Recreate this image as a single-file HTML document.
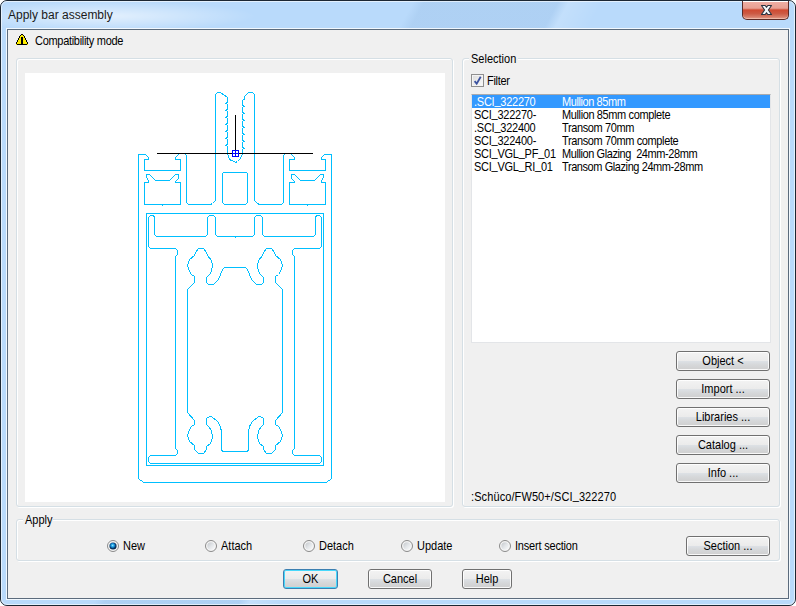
<!DOCTYPE html>
<html><head><meta charset="utf-8">
<style>
html,body{margin:0;padding:0;width:796px;height:606px;overflow:hidden;background:#fff;}
*{box-sizing:border-box;}
body{font-family:"Liberation Sans",sans-serif;font-size:11px;color:#000;position:relative;}
.a{position:absolute;}
.win{left:0;top:0;width:796px;height:606px;border:1px solid #1c2733;border-radius:7px;
 background:radial-gradient(ellipse 150px 15px at 105px 15px,rgba(255,255,255,.6),rgba(255,255,255,0)),
 linear-gradient(118deg,rgba(0,0,0,0) 0,rgba(0,0,0,0) 37%,rgba(120,160,205,.16) 38%,rgba(120,160,205,.16) 50%,rgba(255,255,255,.15) 51%,rgba(0,0,0,0) 54%,rgba(0,0,0,0) 100%),
 #b9dafb;}
.glassin{left:1px;top:1px;width:794px;height:604px;border:1px solid rgba(255,255,255,.6);border-radius:6px;}
.client{left:7px;top:29px;width:782px;height:570px;background:#f0f0f0;border:1px solid #5b6b7c;}
.client2{left:6px;top:28px;width:784px;height:572px;border:1px solid rgba(255,255,255,.8);}
.t{position:absolute;white-space:pre;line-height:13px;}
.gb{position:absolute;border:1px solid #d5dfe5;border-radius:3px;box-shadow:inset 1px 1px 0 #fff,1px 1px 0 #fff;}
.gbl{position:absolute;background:#f0f0f0;padding:0 2px;white-space:pre;line-height:13px;}
.btn{position:absolute;border:1px solid #707070;border-radius:3px;height:20px;
 background:linear-gradient(#f3f3f3 0%,#ebebeb 50%,#dde1e6 50%,#d6d8da 70%,#cfcfcf 100%);
 box-shadow:inset 0 0 0 1px rgba(255,255,255,.85);text-align:center;line-height:17px;white-space:pre;}
.btn.def{border-color:#3c7fb1;box-shadow:inset 0 0 0 1px #48d8fb;}
.t,.gbl{transform:scaleY(1.12);transform-origin:0 10.3px;}
.btn span{display:inline-block;position:relative;top:1px;line-height:13px;transform:scaleY(1.12);transform-origin:50% 10.3px;}
.ttl{transform:none;}
.us{position:relative;top:-2px;}
</style></head><body>
<div class="a win"></div>
<div class="a glassin"></div>
<div class="t ttl" style="left:8px;top:8px;font-size:12px;line-height:15px;color:#1a1a1a;">Apply bar assembly</div>

<!-- close button -->
<div class="a" style="left:742px;top:1px;width:47px;height:19px;border:1px solid #5a2a26;border-top:none;border-radius:0 0 5px 5px;
 background:linear-gradient(#f0b0a6 0,#e8a093 40%,#cf4a32 50%,#cc5a44 70%,#d8806c 90%,#e8aa98 100%);box-shadow:inset 0 1px 0 #fff,inset 0 -1px 0 #efb9a8;"></div>
<svg class="a" style="left:760px;top:4px" width="14" height="12" viewBox="0 0 14 12">
 <path d="M1.5,1.5 H5.2 L6.5,3.3 L7.8,1.5 H11.5 L8.4,6 L11.5,10.5 H7.8 L6.5,8.7 L5.2,10.5 H1.5 L4.6,6 Z" fill="#f4f6f8" stroke="#2b3340" stroke-width="1.1" stroke-linejoin="round"/>
</svg>

<div class="a client2"></div>
<div class="a client"></div>

<!-- compatibility -->
<svg class="a" style="left:16px;top:34px" width="12" height="11" viewBox="0 0 12 11" shape-rendering="crispEdges"><rect x="5" y="0" width="1" height="1" fill="#000"/><rect x="6" y="0" width="1" height="1" fill="#000"/><rect x="4" y="1" width="1" height="1" fill="#000"/><rect x="5" y="1" width="1" height="1" fill="#ffee00"/><rect x="6" y="1" width="1" height="1" fill="#ffee00"/><rect x="7" y="1" width="1" height="1" fill="#000"/><rect x="3" y="2" width="1" height="1" fill="#000"/><rect x="4" y="2" width="1" height="1" fill="#ffee00"/><rect x="5" y="2" width="1" height="1" fill="#ffee00"/><rect x="6" y="2" width="1" height="1" fill="#ffee00"/><rect x="7" y="2" width="1" height="1" fill="#ffee00"/><rect x="8" y="2" width="1" height="1" fill="#000"/><rect x="3" y="3" width="1" height="1" fill="#000"/><rect x="4" y="3" width="1" height="1" fill="#ffee00"/><rect x="5" y="3" width="1" height="1" fill="#000"/><rect x="6" y="3" width="1" height="1" fill="#000"/><rect x="7" y="3" width="1" height="1" fill="#ffee00"/><rect x="8" y="3" width="1" height="1" fill="#000"/><rect x="2" y="4" width="1" height="1" fill="#000"/><rect x="3" y="4" width="1" height="1" fill="#ffee00"/><rect x="4" y="4" width="1" height="1" fill="#ffee00"/><rect x="5" y="4" width="1" height="1" fill="#000"/><rect x="6" y="4" width="1" height="1" fill="#000"/><rect x="7" y="4" width="1" height="1" fill="#ffee00"/><rect x="8" y="4" width="1" height="1" fill="#ffee00"/><rect x="9" y="4" width="1" height="1" fill="#000"/><rect x="2" y="5" width="1" height="1" fill="#000"/><rect x="3" y="5" width="1" height="1" fill="#ffee00"/><rect x="4" y="5" width="1" height="1" fill="#ffee00"/><rect x="5" y="5" width="1" height="1" fill="#000"/><rect x="6" y="5" width="1" height="1" fill="#000"/><rect x="7" y="5" width="1" height="1" fill="#ffee00"/><rect x="8" y="5" width="1" height="1" fill="#ffee00"/><rect x="9" y="5" width="1" height="1" fill="#000"/><rect x="1" y="6" width="1" height="1" fill="#000"/><rect x="2" y="6" width="1" height="1" fill="#ffee00"/><rect x="3" y="6" width="1" height="1" fill="#ffee00"/><rect x="4" y="6" width="1" height="1" fill="#ffee00"/><rect x="5" y="6" width="1" height="1" fill="#000"/><rect x="6" y="6" width="1" height="1" fill="#000"/><rect x="7" y="6" width="1" height="1" fill="#ffee00"/><rect x="8" y="6" width="1" height="1" fill="#ffee00"/><rect x="9" y="6" width="1" height="1" fill="#ffee00"/><rect x="10" y="6" width="1" height="1" fill="#000"/><rect x="1" y="7" width="1" height="1" fill="#000"/><rect x="2" y="7" width="1" height="1" fill="#ffee00"/><rect x="3" y="7" width="1" height="1" fill="#ffee00"/><rect x="4" y="7" width="1" height="1" fill="#ffee00"/><rect x="5" y="7" width="1" height="1" fill="#000"/><rect x="6" y="7" width="1" height="1" fill="#000"/><rect x="7" y="7" width="1" height="1" fill="#ffee00"/><rect x="8" y="7" width="1" height="1" fill="#ffee00"/><rect x="9" y="7" width="1" height="1" fill="#ffee00"/><rect x="10" y="7" width="1" height="1" fill="#000"/><rect x="0" y="8" width="1" height="1" fill="#000"/><rect x="1" y="8" width="1" height="1" fill="#ffee00"/><rect x="2" y="8" width="1" height="1" fill="#ffee00"/><rect x="3" y="8" width="1" height="1" fill="#ffee00"/><rect x="4" y="8" width="1" height="1" fill="#ffee00"/><rect x="5" y="8" width="1" height="1" fill="#000"/><rect x="6" y="8" width="1" height="1" fill="#000"/><rect x="7" y="8" width="1" height="1" fill="#ffee00"/><rect x="8" y="8" width="1" height="1" fill="#ffee00"/><rect x="9" y="8" width="1" height="1" fill="#ffee00"/><rect x="10" y="8" width="1" height="1" fill="#ffee00"/><rect x="11" y="8" width="1" height="1" fill="#000"/><rect x="0" y="9" width="1" height="1" fill="#000"/><rect x="1" y="9" width="1" height="1" fill="#ffee00"/><rect x="2" y="9" width="1" height="1" fill="#ffee00"/><rect x="3" y="9" width="1" height="1" fill="#ffee00"/><rect x="4" y="9" width="1" height="1" fill="#ffee00"/><rect x="5" y="9" width="1" height="1" fill="#000"/><rect x="6" y="9" width="1" height="1" fill="#000"/><rect x="7" y="9" width="1" height="1" fill="#ffee00"/><rect x="8" y="9" width="1" height="1" fill="#ffee00"/><rect x="9" y="9" width="1" height="1" fill="#ffee00"/><rect x="10" y="9" width="1" height="1" fill="#ffee00"/><rect x="11" y="9" width="1" height="1" fill="#000"/><rect x="0" y="10" width="1" height="1" fill="#ffee00"/><rect x="1" y="10" width="1" height="1" fill="#000"/><rect x="2" y="10" width="1" height="1" fill="#000"/><rect x="3" y="10" width="1" height="1" fill="#000"/><rect x="4" y="10" width="1" height="1" fill="#000"/><rect x="5" y="10" width="1" height="1" fill="#000"/><rect x="6" y="10" width="1" height="1" fill="#000"/><rect x="7" y="10" width="1" height="1" fill="#000"/><rect x="8" y="10" width="1" height="1" fill="#000"/><rect x="9" y="10" width="1" height="1" fill="#000"/><rect x="10" y="10" width="1" height="1" fill="#000"/><rect x="11" y="10" width="1" height="1" fill="#ffee00"/></svg>
<div class="t" style="left:35px;top:35px;letter-spacing:-0.3px;">Compatibility mode</div>

<!-- left group -->
<div class="gb" style="left:16px;top:58px;width:437px;height:449px;"></div>
<div class="a" style="left:25px;top:73px;width:420px;height:429px;background:#fff;"></div>

<!-- right group -->
<div class="gb" style="left:462px;top:58px;width:318px;height:449px;"></div>
<div class="gbl" style="left:469px;top:53px;">Selection</div>
<div class="a" style="left:471px;top:74px;width:13px;height:13px;border:1px solid #8f8f8f;background:linear-gradient(135deg,#dcdcdc,#fbfbfb);box-shadow:inset 0 0 0 1px #f4f4f4;"></div>
<svg class="a" style="left:472px;top:75px" width="11" height="11" viewBox="0 0 11 11"><path d="M2.6 6.2 L4.7 8.7 L8.7 1.8" fill="none" stroke="#3b52a0" stroke-width="1.8"/></svg>
<div class="t" style="left:487px;top:75px;letter-spacing:-0.3px;">Filter</div>

<div class="a" style="left:471px;top:94px;width:300px;height:249px;background:#fff;border:1px solid #e3e5e8;border-top-color:#a9aaad;"></div>
<div class="a" style="left:472px;top:95px;width:298px;height:13px;background:#3399ff;"></div>
<div class="a" id="lb" style="left:474px;top:96px;letter-spacing:-0.25px;">
<div class="t" style="left:0;top:0;color:#fff">.SCI<span class="us">_</span>322270</div><div class="t" style="left:88px;top:0;color:#fff;letter-spacing:-0.42px">Mullion 85mm</div>
<div class="t" style="left:0;top:13px">SCI<span class="us">_</span>322270-</div><div class="t" style="left:88px;top:13px;letter-spacing:-0.38px">Mullion 85mm complete</div>
<div class="t" style="left:0;top:26px">.SCI<span class="us">_</span>322400</div><div class="t" style="left:88px;top:26px;letter-spacing:-0.38px">Transom 70mm</div>
<div class="t" style="left:0;top:39px">SCI<span class="us">_</span>322400-</div><div class="t" style="left:88px;top:39px;letter-spacing:-0.38px">Transom 70mm complete</div>
<div class="t" style="left:0;top:52px">SCI<span class="us">_</span>VGL<span class="us">_</span>PF<span class="us">_</span>01</div><div class="t" style="left:88px;top:52px;letter-spacing:-0.42px">Mullion Glazing  24mm-28mm</div>
<div class="t" style="left:0;top:65px">SCI<span class="us">_</span>VGL<span class="us">_</span>RI<span class="us">_</span>01</div><div class="t" style="left:88px;top:65px;letter-spacing:-0.42px">Transom Glazing 24mm-28mm</div>
</div>

<div class="btn" style="left:676px;top:351px;width:94px;"><span>Object &lt;</span></div>
<div class="btn" style="left:676px;top:379px;width:94px;"><span>Import ...</span></div>
<div class="btn" style="left:676px;top:407px;width:94px;"><span>Libraries ...</span></div>
<div class="btn" style="left:676px;top:435px;width:94px;"><span>Catalog ...</span></div>
<div class="btn" style="left:676px;top:463px;width:94px;"><span>Info ...</span></div>
<div class="t" style="left:471px;top:491px;letter-spacing:0.1px;">:Schüco/FW50+/SCI<span class="us">_</span>322270</div>

<svg width="0" height="0" style="position:absolute"><defs>
<radialGradient id="rdot" cx="0.45" cy="0.42" r="0.55"><stop offset="0" stop-color="#a0e8ff"/><stop offset="0.25" stop-color="#34b8f0"/><stop offset="0.5" stop-color="#1580c8"/><stop offset="0.72" stop-color="#0a4478"/><stop offset="0.9" stop-color="#072c50"/></radialGradient>
<linearGradient id="roff" x1="0" y1="0" x2="1" y2="1"><stop offset="0" stop-color="#c4c8cc"/><stop offset="0.5" stop-color="#e2e5e8"/><stop offset="1" stop-color="#fafbfc"/></linearGradient>
</defs></svg>
<!-- apply group -->
<div class="gb" style="left:16px;top:519px;width:764px;height:42px;"></div>
<div class="gbl" style="left:23px;top:514px;padding-right:0;">Apply</div>
<svg class="a" style="left:107px;top:540px" width="12" height="12" viewBox="0 0 12 12"><circle cx="6" cy="6" r="5.5" fill="#f6f6f6" stroke="#8a8a8a" stroke-width="1"/><circle cx="6" cy="6" r="3.6" fill="url(#rdot)"/></svg><div class="t" style="left:123px;top:540px;">New</div>
<svg class="a" style="left:205px;top:540px" width="12" height="12" viewBox="0 0 12 12"><circle cx="6" cy="6" r="5.5" fill="#f6f6f6" stroke="#8a8a8a" stroke-width="1"/><circle cx="6" cy="6" r="3.7" fill="url(#roff)"/></svg><div class="t" style="left:221px;top:540px;">Attach</div>
<svg class="a" style="left:303px;top:540px" width="12" height="12" viewBox="0 0 12 12"><circle cx="6" cy="6" r="5.5" fill="#f6f6f6" stroke="#8a8a8a" stroke-width="1"/><circle cx="6" cy="6" r="3.7" fill="url(#roff)"/></svg><div class="t" style="left:319px;top:540px;">Detach</div>
<svg class="a" style="left:401px;top:540px" width="12" height="12" viewBox="0 0 12 12"><circle cx="6" cy="6" r="5.5" fill="#f6f6f6" stroke="#8a8a8a" stroke-width="1"/><circle cx="6" cy="6" r="3.7" fill="url(#roff)"/></svg><div class="t" style="left:417px;top:540px;">Update</div>
<svg class="a" style="left:499px;top:540px" width="12" height="12" viewBox="0 0 12 12"><circle cx="6" cy="6" r="5.5" fill="#f6f6f6" stroke="#8a8a8a" stroke-width="1"/><circle cx="6" cy="6" r="3.7" fill="url(#roff)"/></svg><div class="t" style="left:515px;top:540px;letter-spacing:-0.2px;">Insert section</div>
<div class="btn" style="left:686px;top:536px;width:84px;"><span>Section ...</span></div>

<div class="btn def" style="left:283px;top:569px;width:55px;"><span>OK</span></div>
<div class="btn" style="left:368px;top:569px;width:64px;"><span>Cancel</span></div>
<div class="btn" style="left:462px;top:569px;width:50px;"><span>Help</span></div>

<!-- drawing -->
<svg class="a" id="drw" style="left:0;top:0" width="796" height="606" viewBox="0 0 796 606" shape-rendering="crispEdges">
<path d="M234.5,482.5 L143.5,482.5 L142.5,481.5 L141.5,480.5 L140.5,480.5 L139.5,479.5 L138.5,478.5 L138.5,154.5 L145.5,154.5 L148.5,157.5 L148.5,159.5 L144.5,159.5 L144.5,170.5 L180.5,170.5 L180.5,159.5 L175.5,159.5 L175.5,157.5 L178.5,154.5 L179.5,153.5 L184.5,153.5 L185.5,154.5 L186.5,155.5 L186.5,202.5 L188.5,204.5 L210.5,204.5 L212.5,203.5 L214.5,201.5 L215.5,200.5 M235.5,482.5 L326.5,482.5 L327.5,481.5 L328.5,480.5 L329.5,480.5 L330.5,479.5 L331.5,478.5 L331.5,154.5 L324.5,154.5 L321.5,157.5 L321.5,159.5 L325.5,159.5 L325.5,170.5 L289.5,170.5 L289.5,159.5 L294.5,159.5 L294.5,157.5 L291.5,154.5 L290.5,153.5 L285.5,153.5 L284.5,154.5 L283.5,155.5 L283.5,202.5 L281.5,204.5 L259.5,204.5 L257.5,203.5 L255.5,201.5 L254.5,200.5 M234.5,236.5 L217.5,236.5 L215.5,234.5 L215.5,217.5 L213.5,215.5 L209.5,215.5 L207.5,217.5 L207.5,234.5 L205.5,236.5 L156.5,236.5 L154.5,234.5 L154.5,217.5 L153.5,215.5 L150.5,215.5 L148.5,217.5 L148.5,246.5 L150.5,248.5 L175.5,248.5 L177.5,250.5 L177.5,254.5 L175.5,256.5 L175.5,448.5 L177.5,450.5 L177.5,453.5 L175.5,455.5 L150.5,455.5 L148.5,457.5 L148.5,461.5 L150.5,463.5 L234.5,463.5 M235.5,236.5 L252.5,236.5 L254.5,234.5 L254.5,217.5 L256.5,215.5 L260.5,215.5 L262.5,217.5 L262.5,234.5 L264.5,236.5 L313.5,236.5 L315.5,234.5 L315.5,217.5 L316.5,215.5 L319.5,215.5 L321.5,217.5 L321.5,246.5 L319.5,248.5 L294.5,248.5 L292.5,250.5 L292.5,254.5 L294.5,256.5 L294.5,448.5 L292.5,450.5 L292.5,453.5 L294.5,455.5 L319.5,455.5 L321.5,457.5 L321.5,461.5 L319.5,463.5 L235.5,463.5 M234.5,267.5 L224.5,267.5 L222.5,269.5 L218.5,279.5 L215.5,282.5 L213.5,284.5 L208.5,284.5 L206.5,282.5 L206.5,277.5 L209.5,274.5 L211.5,271.5 L212.5,265.5 L211.5,260.5 L207.5,255.5 L206.5,252.5 L203.5,248.5 L198.5,248.5 L195.5,252.5 L194.5,255.5 L189.5,259.5 L187.5,265.5 L189.5,271.5 L191.5,274.5 L194.5,276.5 L194.5,282.5 L192.5,284.5 L187.5,289.5 L187.5,412.5 L194.5,420.5 L194.5,424.5 L191.5,426.5 L189.5,429.5 L187.5,435.5 L189.5,441.5 L194.5,445.5 L194.5,449.5 L198.5,453.5 L203.5,453.5 L206.5,449.5 L206.5,446.5 L210.5,443.5 L212.5,437.5 L211.5,430.5 L208.5,426.5 L206.5,424.5 L206.5,418.5 L209.5,416.5 L211.5,416.5 L217.5,421.5 L220.5,426.5 L221.5,432.5 L221.5,450.5 L223.5,451.5 L234.5,451.5 M235.5,267.5 L245.5,267.5 L247.5,269.5 L251.5,279.5 L254.5,282.5 L256.5,284.5 L261.5,284.5 L263.5,282.5 L263.5,277.5 L260.5,274.5 L258.5,271.5 L257.5,265.5 L258.5,260.5 L262.5,255.5 L263.5,252.5 L266.5,248.5 L271.5,248.5 L274.5,252.5 L275.5,255.5 L280.5,259.5 L282.5,265.5 L280.5,271.5 L278.5,274.5 L275.5,276.5 L275.5,282.5 L277.5,284.5 L282.5,289.5 L282.5,412.5 L275.5,420.5 L275.5,424.5 L278.5,426.5 L280.5,429.5 L282.5,435.5 L280.5,441.5 L275.5,445.5 L275.5,449.5 L271.5,453.5 L266.5,453.5 L263.5,449.5 L263.5,446.5 L259.5,443.5 L257.5,437.5 L258.5,430.5 L261.5,426.5 L263.5,424.5 L263.5,418.5 L260.5,416.5 L258.5,416.5 L252.5,421.5 L249.5,426.5 L248.5,432.5 L248.5,450.5 L246.5,451.5 L235.5,451.5 M144.5,204.5 L144.5,182.5 L148.5,182.5 L148.5,180.5 L146.5,177.5 L146.5,174.5 L149.5,174.5 L155.5,180.5 L169.5,180.5 L175.5,174.5 L178.5,174.5 L178.5,178.5 L175.5,181.5 L175.5,182.5 L180.5,182.5 L180.5,204.5 L144.5,204.5 M325.5,204.5 L325.5,182.5 L321.5,182.5 L321.5,180.5 L323.5,177.5 L323.5,174.5 L320.5,174.5 L314.5,180.5 L300.5,180.5 L294.5,174.5 L291.5,174.5 L291.5,178.5 L294.5,181.5 L294.5,182.5 L289.5,182.5 L289.5,204.5 L325.5,204.5 M215.5,200.5 L215.5,94.5 L216.5,93.5 L217.5,92.5 L220.5,92.5 L221.5,93.5 L223.5,94.5 L224.5,95.5 L226.5,96.5 L227.5,97.5 M242.5,100.5 L243.5,99.5 L244.5,99.5 L244.5,96.5 L247.5,93.5 L248.5,92.5 L252.5,92.5 L253.5,93.5 L254.5,94.5 L254.5,200.5 M227.5,153.5 L228.5,156.5 L229.5,159.5 L231.5,160.5 L234.5,161.5 L235.5,162.5 L237.5,161.5 L239.5,159.5 L241.5,156.5 L242.5,153.5 M223.5,172.5 L246.5,172.5 L247.5,173.5 L247.5,202.5 L245.5,204.5 L224.5,204.5 L222.5,202.5 L222.5,173.5 L223.5,172.5 M146.5,213.5 L323.5,213.5 L323.5,465.5 L146.5,465.5 L146.5,213.5" fill="none" stroke="#00bfff" stroke-width="1" stroke-linecap="square"/>
<path d="M225,103h1v1h-1zM225,110h1v1h-1zM225,117h1v1h-1zM225,124h1v1h-1zM225,131h1v1h-1zM225,138h1v1h-1zM225,145h1v1h-1zM226,102h1v1h-1zM226,103h1v1h-1zM226,109h1v1h-1zM226,110h1v1h-1zM226,116h1v1h-1zM226,117h1v1h-1zM226,123h1v1h-1zM226,124h1v1h-1zM226,130h1v1h-1zM226,131h1v1h-1zM226,137h1v1h-1zM226,138h1v1h-1zM226,144h1v1h-1zM226,145h1v1h-1zM227,97h1v1h-1zM227,98h1v1h-1zM227,99h1v1h-1zM227,100h1v1h-1zM227,101h1v1h-1zM227,102h1v1h-1zM227,104h1v1h-1zM227,105h1v1h-1zM227,106h1v1h-1zM227,107h1v1h-1zM227,108h1v1h-1zM227,109h1v1h-1zM227,111h1v1h-1zM227,112h1v1h-1zM227,113h1v1h-1zM227,114h1v1h-1zM227,115h1v1h-1zM227,116h1v1h-1zM227,118h1v1h-1zM227,119h1v1h-1zM227,120h1v1h-1zM227,121h1v1h-1zM227,122h1v1h-1zM227,123h1v1h-1zM227,125h1v1h-1zM227,126h1v1h-1zM227,127h1v1h-1zM227,128h1v1h-1zM227,129h1v1h-1zM227,130h1v1h-1zM227,132h1v1h-1zM227,133h1v1h-1zM227,134h1v1h-1zM227,135h1v1h-1zM227,136h1v1h-1zM227,137h1v1h-1zM227,139h1v1h-1zM227,140h1v1h-1zM227,141h1v1h-1zM227,142h1v1h-1zM227,143h1v1h-1zM227,144h1v1h-1zM227,146h1v1h-1zM227,147h1v1h-1zM227,148h1v1h-1zM227,149h1v1h-1zM227,150h1v1h-1zM227,151h1v1h-1zM227,152h1v1h-1zM227,153h1v1h-1zM242,100h1v1h-1zM242,101h1v1h-1zM242,102h1v1h-1zM242,103h1v1h-1zM242,104h1v1h-1zM242,105h1v1h-1zM242,107h1v1h-1zM242,108h1v1h-1zM242,109h1v1h-1zM242,110h1v1h-1zM242,111h1v1h-1zM242,112h1v1h-1zM242,114h1v1h-1zM242,115h1v1h-1zM242,116h1v1h-1zM242,117h1v1h-1zM242,118h1v1h-1zM242,119h1v1h-1zM242,121h1v1h-1zM242,122h1v1h-1zM242,123h1v1h-1zM242,124h1v1h-1zM242,125h1v1h-1zM242,126h1v1h-1zM242,128h1v1h-1zM242,129h1v1h-1zM242,130h1v1h-1zM242,131h1v1h-1zM242,132h1v1h-1zM242,133h1v1h-1zM242,135h1v1h-1zM242,136h1v1h-1zM242,137h1v1h-1zM242,138h1v1h-1zM242,139h1v1h-1zM242,140h1v1h-1zM242,142h1v1h-1zM242,143h1v1h-1zM242,144h1v1h-1zM242,145h1v1h-1zM242,146h1v1h-1zM242,147h1v1h-1zM242,149h1v1h-1zM242,150h1v1h-1zM242,151h1v1h-1zM242,152h1v1h-1zM242,153h1v1h-1zM243,105h1v1h-1zM243,106h1v1h-1zM243,112h1v1h-1zM243,113h1v1h-1zM243,119h1v1h-1zM243,120h1v1h-1zM243,126h1v1h-1zM243,127h1v1h-1zM243,133h1v1h-1zM243,134h1v1h-1zM243,140h1v1h-1zM243,141h1v1h-1zM243,147h1v1h-1zM243,148h1v1h-1zM244,106h1v1h-1zM244,113h1v1h-1zM244,120h1v1h-1zM244,127h1v1h-1zM244,134h1v1h-1zM244,141h1v1h-1zM244,148h1v1h-1z" fill="#00bfff"/>
<rect x="162" y="205" width="1" height="1" fill="#00bfff"/>
<rect x="307" y="205" width="1" height="1" fill="#00bfff"/>
<rect x="235" y="237" width="1" height="1" fill="#00bfff"/>
<rect x="157" y="153" width="156" height="1" fill="#000"/>
<rect x="235" y="115" width="1" height="36" fill="#000"/>
<path d="M232.5,150.5 H238.5 V156.5 H232.5 Z M235.5,150.5 V156.5 M232.5,153.5 H238.5" fill="none" stroke="#0000ff" stroke-width="1"/>
</svg>
</body></html>
